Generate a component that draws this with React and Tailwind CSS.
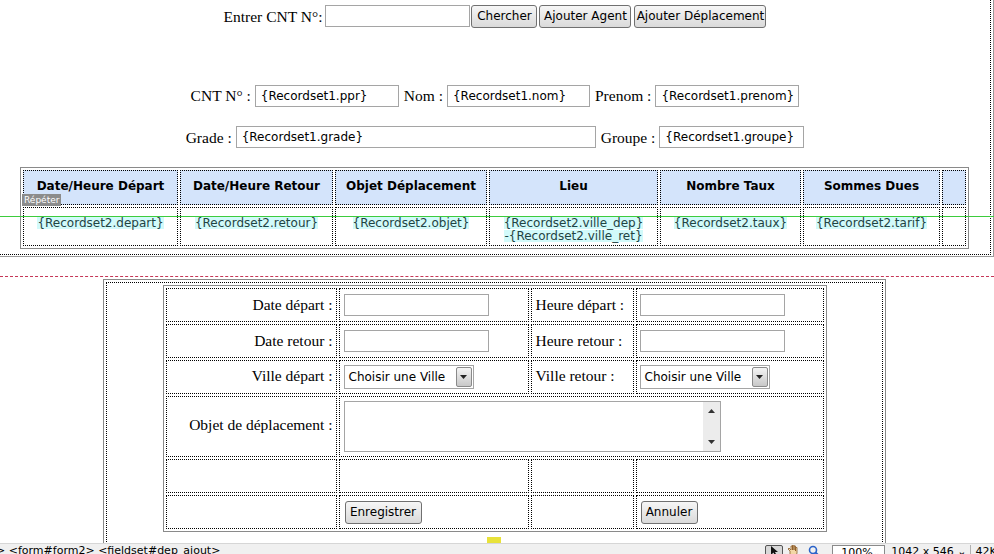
import React from 'react'

// Dreamweaver design view of the "déplacements" page

const SANS = "[font-family:'DejaVu_Sans',sans-serif]"
const SERIF = "[font-family:'Liberation_Serif',serif]"

const HEADERS = [
  'Date/Heure Départ',
  'Date/Heure Retour',
  'Objet Déplacement',
  'Lieu',
  'Nombre Taux',
  'Sommes Dues',
  '',
]

const ROW = [
  ['{Recordset2.depart}'],
  ['{Recordset2.retour}'],
  ['{Recordset2.objet}'],
  ['{Recordset2.ville_dep}', '-{Recordset2.ville_ret}'],
  ['{Recordset2.taux}'],
  ['{Recordset2.tarif}'],
  [],
]

function Btn({ children, className = '' }) {
  return (
    <button
      className={`h-[23px] shrink-0 whitespace-nowrap rounded-[3px] border border-[#707070] bg-gradient-to-b from-[#f6f6f6] to-[#dadada] px-0 text-[12px] leading-none text-black ${SANS} ${className}`}
    >
      {children}
    </button>
  )
}

function Field({ value = '', className = '' }) {
  return (
    <div
      className={`flex h-[22px] shrink-0 items-center whitespace-nowrap border border-[#a5a5a5] bg-white px-[5px] text-[12px] text-black ${SANS} ${className}`}
    >
      {value}
    </div>
  )
}

function Select() {
  return (
    <div className={`flex h-[24px] w-[130px] items-center border border-[#a5a5a5] bg-white pl-[4px] pr-[1px] text-[12px] text-black ${SANS}`}>
      <span className="flex-1 whitespace-nowrap">Choisir une Ville</span>
      <span className="flex h-[20px] w-[16px] items-center justify-center rounded-[2px] border border-[#8a8a8a] bg-gradient-to-b from-[#f4f4f4] to-[#c8c8c8]">
        <svg width="7" height="4" viewBox="0 0 7 4"><path d="M0 0h7L3.5 4z" fill="#222" /></svg>
      </span>
    </div>
  )
}

function Cell({ children, className = '' }) {
  return <div className={`border border-dotted border-black ${className}`}>{children}</div>
}

export default function App() {
  return (
    <div className="relative flex h-[554px] w-[994px] flex-col overflow-hidden bg-white">
      {/* top form */}
      <div className="h-[257px] shrink-0 border-b border-r border-[#9a9a9a] pb-[1px] pr-[2px]">
        <div className="h-full border-b border-r border-dotted border-black">
          <div className="flex items-center justify-center pt-[4px]">
            <span className={`mr-[3px] mt-[1px] whitespace-nowrap text-[15.5px] ${SERIF}`}>Entrer CNT N°:</span>
            <Field className="w-[145px]" />
            <div className="ml-[1px] flex gap-[2px]">
              <Btn className="w-[66px] text-[11.5px]">Chercher</Btn>
              <Btn className="w-[92px] text-[11.5px]">Ajouter Agent</Btn>
              <Btn className="ml-[1px] w-[132px] text-[11.5px]">Ajouter Déplacement</Btn>
            </div>
          </div>

          <div className={`mt-[56px] flex items-center justify-center whitespace-nowrap text-[15.5px] ${SERIF}`}>
            <span className="mr-[4px]">CNT N° :</span>
            <Field value="{Recordset1.ppr}" className="w-[144px]" />
            <span className="ml-[5px] mr-[4px]">Nom :</span>
            <Field value="{Recordset1.nom}" className="w-[143px]" />
            <span className="ml-[5px] mr-[4px]">Prenom :</span>
            <Field value="{Recordset1.prenom}" className="w-[144px]" />
          </div>

          <div className={`mt-[18px] flex items-center justify-center whitespace-nowrap text-[15.5px] ${SERIF}`}>
            <span className="mr-[4px]">Grade :</span>
            <Field value="{Recordset1.grade}" className="w-[360px]" />
            <span className="ml-[5px] mr-[4px]">Groupe :</span>
            <Field value="{Recordset1.groupe}" className="w-[145px]" />
          </div>

          {/* results table */}
          <div className="relative ml-[20px] mt-[18px] w-[949px]">
            <div className={`grid grid-cols-[155px_153px_152px_169px_141px_137px_24px] gap-[2px] border border-[#8a8a8a] p-[2px] text-[12px] ${SANS}`}>
              {HEADERS.map((h, i) => (
                <Cell key={i} className="h-[35px] whitespace-nowrap bg-[#d4e4fb] pt-[6px] text-center font-bold text-black">
                  {h}
                </Cell>
              ))}
              {ROW.map((lines, i) => (
                <Cell key={i} className="h-[39px] pt-[9px] text-center leading-[13px] text-[#1f4444]">
                  {lines.map((l) => (
                    <div key={l}>
                      <span className="inline-block whitespace-nowrap bg-[#d2fafa] leading-[12px]">{l}</span>
                    </div>
                  ))}
                </Cell>
              ))}
            </div>
            <span className={`absolute left-[2px] top-[27px] bg-[#8c8c8c] px-[2px] text-[9px] leading-[12px] text-white ${SANS}`}>
              Répéter
            </span>
          </div>
        </div>
      </div>

      {/* page break line */}
      <div className="mt-[19px] h-0 shrink-0 border-t border-dashed border-[#c63657]" />

      {/* fieldset#dep_ajout */}
      <div className="mt-[2px] min-h-0 flex-1 overflow-hidden">
        <div className="ml-[103px] h-[280px] w-[783px] border border-[#8a8a8a] p-[2px]">
          <div className="h-full border border-dotted border-black pt-[2px]">
            <div className={`mx-auto grid w-[664px] grid-cols-[171px_190px_103px_188px] grid-rows-[34px_34px_34px_61px_34px_34px] gap-[2px] whitespace-nowrap border border-[#8a8a8a] p-[2px] text-[15.5px] ${SERIF}`}>
              <Cell className="flex items-center justify-end pr-[3px]">Date départ :</Cell>
              <Cell className="flex items-center pl-[4px]"><Field className="w-[145px]" /></Cell>
              <Cell className="flex items-center pl-[4px]">Heure départ :</Cell>
              <Cell className="flex items-center pl-[3px]"><Field className="w-[145px]" /></Cell>

              <Cell className="flex items-center justify-end pr-[3px]">Date retour :</Cell>
              <Cell className="flex items-center pl-[4px]"><Field className="w-[145px]" /></Cell>
              <Cell className="flex items-center pl-[4px]">Heure retour :</Cell>
              <Cell className="flex items-center pl-[3px]"><Field className="w-[145px]" /></Cell>

              <Cell className="flex items-center justify-end pb-[3px] pr-[3px]">Ville départ :</Cell>
              <Cell className="flex items-center pl-[4px]"><Select /></Cell>
              <Cell className="flex items-center pb-[3px] pl-[4px]">Ville retour :</Cell>
              <Cell className="flex items-center pl-[3px]"><Select /></Cell>

              <Cell className="flex items-center justify-end pb-[4px] pr-[3px]">Objet de déplacement :</Cell>
              <Cell className="col-span-3 flex items-center pl-[4px]">
                <div className="flex h-[51px] w-[377px] border border-[#a5a5a5] bg-white">
                  <div className="flex-1" />
                  <div className="flex w-[17px] flex-col items-center justify-between bg-[#ececec] py-[7px]">
                    <svg width="7" height="4" viewBox="0 0 7 4"><path d="M0 4h7L3.5 0z" fill="#333" /></svg>
                    <svg width="7" height="4" viewBox="0 0 7 4"><path d="M0 0h7L3.5 4z" fill="#333" /></svg>
                  </div>
                </div>
              </Cell>

              <Cell />
              <Cell />
              <Cell />
              <Cell />

              <Cell />
              <Cell className="flex items-center pl-[5px]"><Btn className="w-[77px]">Enregistrer</Btn></Cell>
              <Cell />
              <Cell className="flex items-center pl-[4px]"><Btn className="w-[57px]">Annuler</Btn></Cell>
            </div>
            <div className="ml-[380px] mt-[5px] h-[6px] w-[14px] bg-[#e8e23a]" />
          </div>
        </div>
      </div>

      {/* status bar */}
      <div className={`flex h-[11px] shrink-0 items-start border-t border-[#d6d6d6] bg-[#f0f0f0] text-[11px] leading-[14px] text-black ${SANS}`}>
        <span className="-ml-[4px] whitespace-pre">{'> <form#form2> <fieldset#dep_ajout>'}</span>
        <div className="-mr-[16px] ml-auto flex items-start gap-[4px] pt-[1px]">
          <span className="flex h-[12px] w-[18px] items-start justify-center rounded-[2px] border border-[#555] bg-[#d8d8d8]">
            <svg width="8" height="10" viewBox="0 0 8 10"><path d="M1 0v9l2.5-2.5L5 10l1.5-.7L5 6h3z" fill="#111" /></svg>
          </span>
          <svg width="13" height="12" viewBox="0 0 13 12"><path d="M3 11V6L1 4l1-1 2 2V1h1.5v4V0H7v5V1h1.5v5V2.5H10V8l-1 3z" fill="#f3d7a6" stroke="#8a5a2a" strokeWidth="0.8" /></svg>
          <svg width="12" height="12" viewBox="0 0 12 12" className="ml-[4px]"><circle cx="5" cy="5" r="3.5" fill="none" stroke="#2a62c9" strokeWidth="1.6" /><path d="M7.5 7.5L11 11" stroke="#2a62c9" strokeWidth="2" /></svg>
          <span className="ml-[8px] flex h-[14px] w-[53px] items-start justify-between border border-[#8a8a8a] bg-white px-[8px]">
            <span>100%</span><span className="text-[9px]">⌄</span>
          </span>
          <span className="ml-[2px] whitespace-pre border-r border-[#b0b0b0] pr-[4px]">1042 x 546 ⌄</span>
          <span className="whitespace-pre">42Ko /</span>
        </div>
      </div>

      {/* guide line */}
      <div className="absolute left-0 top-[216px] h-px w-full bg-[#3dcc3d]" />
    </div>
  )
}
